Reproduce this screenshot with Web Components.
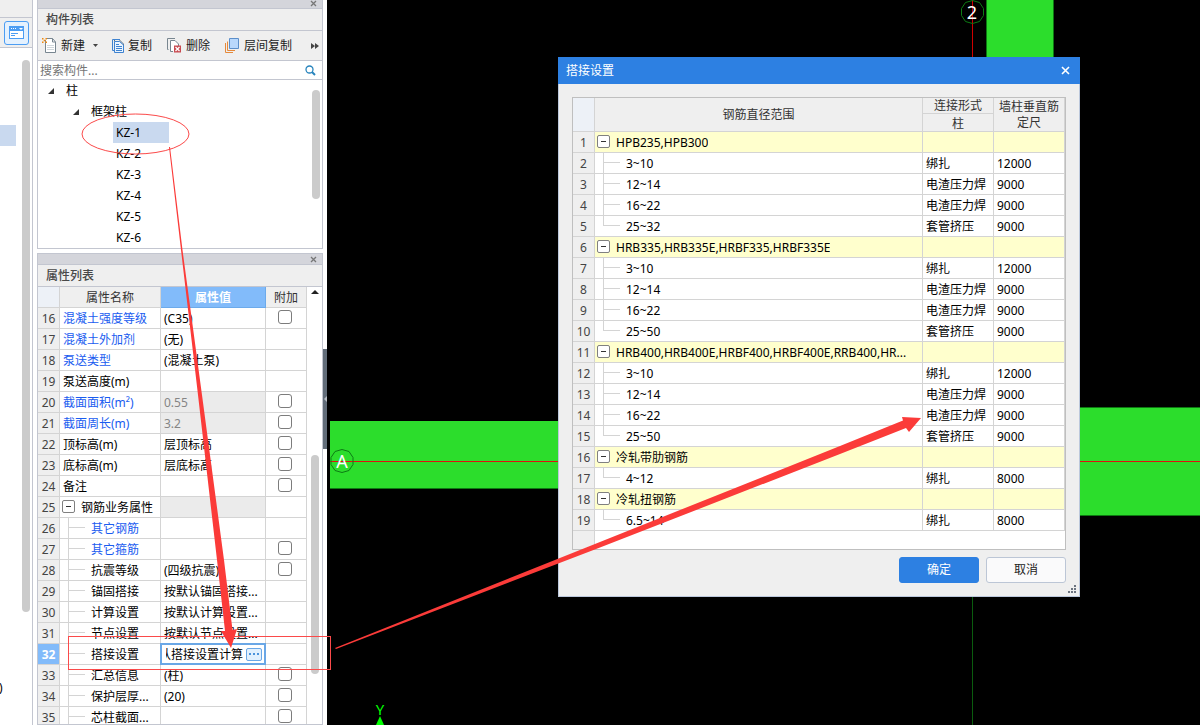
<!DOCTYPE html>
<html lang="zh-CN">
<head>
<meta charset="utf-8">
<title>搭接设置</title>
<style>
html, body { height: 100%; margin: 0; }
body {
  font: 12px/20px "Noto Sans", "Noto Sans CJK SC", sans-serif;
  color: #000;
  background: #000;
  --line: #d4d4d4;
  --frame: #c3c6d0;
  --face: #efefef;
  --blue: #2d80e2;
  --thumb: #cbcbcb;
}
</style>
</head>
<body>
<modeler-app></modeler-app>

<script>
const define = (name, html, setup) => {
  const template = document.createElement('template');
  template.innerHTML = html;
  customElements.define(name, class extends HTMLElement {
    constructor() {
      super();
      this.attachShadow({ mode: 'open' }).append(template.content.cloneNode(true));
    }
    connectedCallback() { if (setup) setup(this.shadowRoot, this); }
  });
};

/* Narrow module strip at the far left */
define('nav-strip', `
<style>
:host { display: flex; flex-direction: column; background: #fff; border-right: 1px solid var(--frame); overflow: hidden; }
.top { height: 17px; flex: none; background: var(--face); border-bottom: 1px solid var(--frame); }
.tab { height: 29px; flex: none; display: flex; justify-content: flex-end; align-items: center; padding-right: 3px; background: var(--face); border-bottom: 1px solid var(--frame); }
button { width: 25px; height: 24px; padding: 0; border: 1px solid #4c9df3; border-radius: 3px; background: #e4f1fe; display: grid; place-items: center; }
.body { flex: 1; min-height: 0; display: flex; justify-content: space-between; }
.items { width: 16px; padding-top: 77px; }
.sel { height: 21px; background: #c9d9ef; }
.cut { margin-top: 532px; margin-left: -1px; }
.thumb { width: 8px; height: 552px; margin: 12px 2px 0 0; border-radius: 4px; background: var(--thumb); }
</style>
<div class="top"></div>
<div class="tab"><button aria-label="构件"><svg width="15" height="13" viewBox="0 0 15 13"><path d="M0 0H15V13H0z" fill="#4c9df3"/><path d="M1 5H14V12H1z" fill="#fff"/><path d="M2 2h1v1H2zM4 2h1v1H4zM6 2h1v1H6z" fill="#fff"/><path d="M10 2h4l-2 2z" fill="#fff"/><path d="M2 7.500H9M2 9.500H6" stroke="#4c9df3"/></svg></button></div>
<div class="body"><div class="items"><div class="sel"></div><div class="cut">)</div></div><div class="thumb"></div></div>
`);

/* Docked panel with grip bar, title and slotted content */
define('dock-panel', `
<style>
:host { display: flex; flex-direction: column; border: 1px solid var(--frame); background: #fff; min-height: 0; }
.grip { height: 10px; flex: none; display: flex; justify-content: flex-end; align-items: center; background: #d4d5db; border-bottom: 1px solid var(--frame); }
.grip button { border: 0; padding: 0 5px; background: none; display: flex; }
h2 { flex: none; margin: 0; padding-left: 8px; height: 21px; font: inherit; font-weight: 500; line-height: 22px; color: #484848; background: var(--face); border-bottom: 1px solid var(--frame); }
</style>
<div class="grip"><button aria-label="关闭"><svg width="7" height="7" viewBox="0 0 7 7"><path d="M1 1L6 6M6 1L1 6" stroke="#777" stroke-width="1.300"/></svg></button></div>
<h2></h2>
<slot></slot>
`, (root, host) => { root.querySelector('h2').textContent = host.getAttribute('heading'); });

define('tool-button', `
<style>
:host { display: block; flex: none; }
button { display: flex; align-items: center; gap: 4px; border: 0; padding: 0; background: none; font: inherit; color: #1c1c1c; height: 24px; }
</style>
<button><slot name="icon"></slot><slot></slot><slot name="after"></slot></button>
`);

define('component-tree', `
<style>
:host { display: block; }
.tools { display: flex; align-items: center; gap: 14px; height: 29px; padding: 0 3px 0 4px; background: var(--face); border-bottom: 1px solid var(--frame); }
.more { margin-left: auto; }
svg { display: block; }
.search { display: flex; align-items: center; height: 18px; border-bottom: 1px solid var(--frame); padding-right: 6px; }
input { flex: 1; min-width: 0; border: 0; outline: 0; padding: 2px 2px 0; font: inherit; height: 18px; box-sizing: border-box; background: none; }
input::placeholder { color: #757575; opacity: 1; }
.search button { border: 0; padding: 0; background: none; }
.wrap { display: flex; justify-content: space-between; height: 168px; overflow: hidden; }
ul { list-style: none; margin: 0; padding: 0; }
li > span { display: flex; align-items: center; gap: 12px; height: 21px; }
ul ul { padding-left: 25px; }
.root { padding-left: 10px; }
.leaf { width: 53px; padding-left: 3px; margin-left: 15px; }
li > .on { background: #c9d9ef; }
.thumb { width: 8px; height: 109px; margin: 10px 2px 0 0; border-radius: 4px; background: var(--thumb); }
</style>
<div class="tools">
  <tool-button>
    <svg slot="icon" width="15" height="15" viewBox="0 0 15 15"><path d="M3.500 2V14.500H13.500V4L10.500 .500H5" fill="#fff" stroke="#788690"/><path d="M10.500 .500V4H13.500" fill="none" stroke="#788690"/><path d="M5 7.500h7M5 9.500h7M5 11.500h7" stroke="#cfd6da"/><path d="M0 0h1.500v1.500H0zM3.500 0H5v1.500H3.500zM1.700 1.700h1.600v1.600H1.700zM0 3.500h1.500V5H0zM3.500 3.500H5V5H3.500z" fill="#f08a10"/></svg>
    新建
    <svg slot="after" width="9" height="5" viewBox="0 0 9 5"><path d="M4 1h5L6.500 4z" fill="#444"/></svg>
  </tool-button>
  <tool-button>
    <svg slot="icon" width="12" height="14" viewBox="0 0 12 14"><path d="M2.500 2.500V.500H7L11.500 5V11.500H9" fill="none" stroke="#5a7080"/><path d="M8 .500H.500V11.500H2" fill="none" stroke="#3f83d0"/><path d="M2.500 2.500H7.500L11.500 6V13.500H2.500z" fill="#eaf4ff" stroke="#3f83d0"/><path d="M4 5.500h3M4 7.500h6M4 9.500h6M4 11.500h6" stroke="#3f83d0"/></svg>
    复制
  </tool-button>
  <tool-button>
    <svg slot="icon" width="16" height="15" viewBox="0 0 16 15"><path d="M2.500 11.500H1.500V.500H9" fill="none" stroke="#788690"/><path d="M7 13.500H4.500V2.500H9L12.500 6V8" fill="#fff" stroke="#788690"/><path d="M8 7.500h7v7H8z" fill="#c84a50"/><path d="M9.500 9L13.500 13M13.500 9L9.500 13" stroke="#fff" stroke-width="1.300"/></svg>
    删除
  </tool-button>
  <tool-button>
    <svg slot="icon" width="16" height="16" viewBox="0 0 16 16"><path d="M1.500 5V14.500H9M3.500 3.500V12.500H11" fill="none" stroke="#e58a3c"/><path d="M5.500 .500H14.500V10.500H5.500z" fill="#b9d8fc" stroke="#5c8fca"/></svg>
    层间复制
  </tool-button>
  <tool-button class="more"><svg slot="icon" width="8" height="6" viewBox="0 0 8 6"><path d="M0 0L4 3L0 6zM4 0L8 3L4 6z" fill="#444"/></svg></tool-button>
</div>
<div class="search"><input type="text" aria-label="搜索构件" placeholder="搜索构件..."><button aria-label="搜索"><svg width="11" height="11" viewBox="0 0 11 11"><circle cx="4.500" cy="4.500" r="3.500" fill="none" stroke="#2784bd" stroke-width="1.300"/><path d="M7 7L10 10" stroke="#2784bd" stroke-width="2"/></svg></button></div>
<div class="wrap">
  <ul class="root">
    <li><span><svg width="6" height="6"><path d="M6 0V6H0z" fill="#333"/></svg>柱</span>
      <ul><li><span><svg width="6" height="6"><path d="M6 0V6H0z" fill="#333"/></svg>框架柱</span>
        <ul id="leaves"></ul></li></ul></li>
  </ul>
  <div class="thumb"></div>
</div>
`, root => {
  root.getElementById('leaves').innerHTML = [1, 2, 3, 4, 5, 6].map(n =>
    `<li><span class="leaf${n === 1 ? ' on' : ''}">KZ-${n}</span></li>`).join('');
});

/* Grid styling shared by the two tables */
const gridCSS = `
table { border-collapse: separate; border-spacing: 0; table-layout: fixed; width: 100%; }
th, td { box-sizing: border-box; height: 21px; line-height: 18px; padding: 2px 0 0 3px; border: 0 solid var(--line); border-width: 0 1px 1px 0; font-weight: 400; text-align: left; white-space: nowrap; overflow: hidden; }
tr { height: 21px; }
td { background-color: #fff; }
th { padding: 2px 0 0; text-align: center; color: #333; background: var(--face); }
tbody th { color: #444; }
thead .corner { background: #edf1f7; }
td.node { padding: 0 0 0 2px; }
td.child { padding-left: 31px; background-image: linear-gradient(var(--line), var(--line)), linear-gradient(var(--line), var(--line)); background-repeat: no-repeat; background-position: 8px 0, 8px 9px; background-size: 1px 100%, 17px 1px; }
td.last { background-size: 1px 10px, 17px 1px; }
.node div { display: flex; align-items: flex-start; gap: 6px; height: 20px; }
.node span { padding-top: 2px; overflow: hidden; text-overflow: ellipsis; }
.fold { flex: none; width: 13px; height: 13px; margin: 3px 0 0; padding: 0; border: 1px solid #808080; border-radius: 2px; background: #fff; display: grid; place-items: center; }
.fold::before { content: ""; width: 5px; height: 1px; background: #333; }
`;
const node = text => `<td class="node"><div><button class="fold" aria-label="折叠"></button><span>${text}</span></div></td>`;

define('property-grid', `
<style>${gridCSS}
:host { display: flex; flex: 1; min-height: 0; overflow: hidden; }
.rows { flex: 1; min-width: 0; }
thead .cur { background: #82bbfa; color: #fff; font-weight: 700; border-color: #6caaeb; }
tbody .cur { background: #82bbfa; color: #fff; font-weight: 700; }
.blue { color: #1a5cf0; }
.off { background: #ebebeb; color: #858585; }
td.tick { padding: 0; }
.tick input { appearance: none; display: block; box-sizing: border-box; width: 14px; height: 14px; margin: 0 0 2px 12px; border: 1px solid #7c7c7c; border-radius: 3px; background: #fff; }
td.edit { padding: 0; overflow: visible; }
.field { display: flex; align-items: center; gap: 3px; box-sizing: border-box; height: 22px; margin: -1px; padding: 0 2px 0 4px; border: 2px solid #6aa7e6; background: #fff; }
.field input { flex: 1; min-width: 0; box-sizing: border-box; border: 0; outline: 0; padding: 2px 0 0; font: inherit; height: 18px; background: none; }
.field button { flex: none; width: 16px; height: 13px; padding: 0; border: 1px solid #6aa7e6; border-radius: 2px; background: #e1f0fe; display: grid; place-items: center; }
.bar { width: 16px; flex: none; display: flex; flex-direction: column; align-items: center; gap: 160px; padding: 3px 0 0 2px; box-sizing: border-box; }
.bar svg { flex: none; }
.thumb { flex: none; width: 8px; height: 219px; border-radius: 4px; background: var(--thumb); }
</style>
<div class="rows"><table>
<colgroup><col style="width:22px"><col style="width:101px"><col style="width:105px"><col style="width:41px"></colgroup>
<thead><tr><th class="corner"></th><th>属性名称</th><th class="cur">属性值</th><th>附加</th></tr></thead>
<tbody></tbody></table></div>
<div class="bar"><svg width="8" height="5"><path d="M4 0L8 4H0z" fill="#222"/></svg><div class="thumb"></div></div>
`, root => {
  /* name, value, has tick box, name style, value style */
  const rows = [
    ['混凝土强度等级', '(C35)', 1, 'blue'], ['混凝土外加剂', '(无)', 0, 'blue'],
    ['泵送类型', '(混凝土泵)', 0, 'blue'], ['泵送高度(m)', '', 0, ''],
    ['截面面积(m²)', '0.55', 1, 'blue', 'off'], ['截面周长(m)', '3.2', 1, 'blue', 'off'],
    ['顶标高(m)', '层顶标高', 1, ''], ['底标高(m)', '层底标高', 1, ''], ['备注', '', 1, ''],
    ['钢筋业务属性', '', 0, 'node', 'off'],
    ['其它钢筋', '', 0, 'child blue'], ['其它箍筋', '', 1, 'child blue'],
    ['抗震等级', '(四级抗震)', 1, 'child'], ['锚固搭接', '按默认锚固搭接...', 0, 'child'],
    ['计算设置', '按默认计算设置...', 0, 'child'], ['节点设置', '按默认节点设置...', 0, 'child'],
    ['搭接设置', null, 0, 'child'], ['汇总信息', '(柱)', 1, 'child'],
    ['保护层厚...', '(20)', 1, 'child'], ['芯柱截面...', '', 1, 'child'],
  ];
  root.querySelector('tbody').innerHTML = rows.map(([name, value, tick, cls, vcls], i) => `
    <tr><th${value === null ? ' class="cur"' : ''}>${i + 16}</th>
    ${cls === 'node' ? node(name) : `<td class="${cls}">${name}</td>`}
    ${value === null
      ? `<td class="edit"><div class="field"><input type="text" aria-label="${name}" value="按默认搭接设置计算"><button aria-label="更多"><svg width="10" height="2"><path d="M0 0h2v2H0zM4 0h2v2H4zM8 0h2v2H8z" fill="#4b93dc"/></svg></button></div></td>`
      : `<td class="${vcls || ''}">${value}</td>`}
    <td class="tick">${tick ? `<input type="checkbox" aria-label="附加 ${name}">` : ''}</td></tr>`).join('');
  /* keep the end of the edited value in view */
  const field = root.querySelector('.field input');
  field.scrollLeft = field.scrollWidth;
});

/* Drawing area: beams, axes and their labels */
define('cad-canvas', `
<style>
:host { display: block; position: relative; background: #000; overflow: hidden; }
svg { display: block; width: 100%; height: 100%; }
text { font-family: "Noto Sans", sans-serif; font-size: 18px; fill: #fff; text-anchor: middle; }
.beam { fill: #2cdd2c; stroke: #0d7a12; }
.bubble { fill: none; stroke: #0c7c14; }
</style>
<svg aria-label="绘图区">
  <path d="M645.500 590V2000" stroke="#0a5c0e"/>
  <rect class="beam" x="659.500" y="-5.500" width="67" height="90"/>
  <rect class="beam" x="720.500" y="407.500" width="3000" height="108"/>
  <path d="M3 421H300V489H3z" fill="#2cdd2c"/>
  <path d="M3 488.500H300" stroke="#0d7a12"/>
  <path d="M3 461.500H3000" stroke="#e01010"/>
  <path d="M645.500 0V58" stroke="#d00000"/>
  <path class="bubble" d="M15 449.500l7 2 4 6v7l-4 6-7 2-7-2-4-6v-7l4-6z"/>
  <path class="bubble" d="M645.500 .500l7 2 4 6v7l-4 6-7 2-7-2-4-6v-7l4-6z"/>
  <text x="15" y="468">A</text>
  <text x="645" y="19">2</text>
  <text x="53" y="715" style="fill:#0f0;font-size:15px">Y</text>
  <path d="M53 716L57 725V730H49V725z" fill="#0f0"/>
</svg>
<slot></slot>
`);

define('lap-dialog', `
<style>${gridCSS}
:host { display: flex; flex-direction: column; box-sizing: border-box; border: 1px solid #bcc8dc; border-top: 0; background: var(--face); }
header { display: flex; align-items: center; justify-content: space-between; height: 27px; margin: 0 -1px; padding: 0 10px 0 8px; background: var(--blue); color: #fff; }
h1 { margin: 0; font: inherit; }
header button { border: 0; padding: 0; background: none; display: flex; }
.frame { margin: 13px 13px 0; border: 1px solid #bfbfbf; background: linear-gradient(90deg, var(--face) 21px, var(--line) 21px, var(--line) 22px, #fff 22px); padding-bottom: 18px; }
thead tr:first-child { height: 16px; }
thead tr + tr { height: 18px; }
thead th { line-height: 14px; height: 16px; padding-top: 1px; }
thead tr + tr th { line-height: 15px; height: 18px; padding-top: 2px; }
thead th.two { line-height: 16px; white-space: normal; padding: 1px 4px 0; }
.group td { background-color: #ffffcd; }
footer { display: flex; justify-content: flex-end; gap: 7px; padding: 7px 13px 0; }
footer button { width: 80px; height: 26px; padding: 0; font: inherit; border: 1px solid #bcc6d6; border-radius: 3px; background: #fafafb; color: #222; }
footer .ok { background: var(--blue); border-color: var(--blue); color: #fff; }
.grip { align-self: flex-end; margin: 2px 2px; display: block; }
</style>
<header><h1>搭接设置</h1><button aria-label="关闭"><svg width="9" height="9" viewBox="0 0 9 9"><path d="M1 1L8 8M8 1L1 8" stroke="#fff" stroke-width="1.600"/></svg></button></header>
<div class="frame"><table>
<colgroup><col style="width:22px"><col><col style="width:71px"><col style="width:71px"></colgroup>
<thead>
<tr><th rowspan="2" class="corner"></th><th rowspan="2">钢筋直径范围</th><th>连接形式</th><th rowspan="2" class="two">墙柱垂直筋定尺</th></tr>
<tr><th>柱</th></tr>
</thead><tbody></tbody></table></div>
<footer><button class="ok">确定</button><button>取消</button></footer>
<svg class="grip" width="9" height="9"><path d="M6 0h2v2H6zM3 3h2v2H3zM6 3h2v2H6zM0 6h2v2H0zM3 6h2v2H3zM6 6h2v2H6z" fill="#6c7480"/></svg>
`, root => {
  const tie = '绑扎', weld = '电渣压力焊', sleeve = '套管挤压';
  const bars = max => [['3~10', tie, 12000], ['12~14', weld, 9000], ['16~22', weld, 9000], [max, sleeve, 9000]];
  const groups = [
    ['HPB235,HPB300', bars('25~32')],
    ['HRB335,HRB335E,HRBF335,HRBF335E', bars('25~50')],
    ['HRB400,HRB400E,HRBF400,HRBF400E,RRB400,HR...', bars('25~50')],
    ['冷轧带肋钢筋', [['4~12', tie, 8000]]],
    ['冷轧扭钢筋', [['6.5~14', tie, 8000]]],
  ];
  let n = 0;
  root.querySelector('tbody').innerHTML = groups.map(([name, items]) =>
    `<tr class="group"><th>${++n}</th>${node(name)}<td></td><td></td></tr>` +
    items.map(([range, joint, len], i) =>
      `<tr><th>${++n}</th><td class="child${i === items.length - 1 ? ' last' : ''}">${range}</td><td>${joint}</td><td>${len}</td></tr>`).join('')
  ).join('');
});

/* Red guide marks drawn over the window */
define('guide-marks', `
<style>
:host { display: block; pointer-events: none; }
svg { display: block; width: 100%; height: 100%; }
.o { fill: none; stroke: #fb4a4a; }
.f { fill: #fb3b39; }
</style>
<svg aria-hidden="true">
  <ellipse class="o" cx="135.500" cy="134" rx="53.500" ry="20"/>
  <rect class="o" x="68.500" y="636.500" width="262" height="33"/>
  <path class="f" d="M169 147L170 147L182.500 250L202 395L224 560L232.500 630L237 629L231 648L221 631L225 631L217 560L198 395L181 250z"/>
  <path class="f" d="M335 648L840 446L903 420.500L902 417L921 418L909 432L906 428L840 454L600 547.500L336 649z"/>
</svg>
`);

define('modeler-app', `
<style>
:host { display: grid; grid-template-columns: 33px 294px 1fr; grid-template-rows: 100vh; position: relative; overflow: hidden; }
.dock { display: grid; grid-template-columns: 286px 4px; padding-left: 4px; background: #fff; min-height: 0; }
.panels { display: flex; flex-direction: column; gap: 4px; min-height: 0; margin-top: -3px; }
.props { flex: 1; }
.handle { height: 100px; margin-top: 349px; border: 0; padding: 0; background: #626d79; display: flex; align-items: center; }
lap-dialog { position: absolute; left: 231px; top: 57px; width: 522px; }
guide-marks { position: absolute; inset: 0; }
</style>
<nav-strip></nav-strip>
<div class="dock">
  <div class="panels">
    <dock-panel heading="构件列表"><component-tree></component-tree></dock-panel>
    <dock-panel class="props" heading="属性列表"><property-grid></property-grid></dock-panel>
  </div>
  <button class="handle" aria-label="收起"><svg width="4" height="6"><path d="M4 0V6L1 3z" fill="#b8bec5"/></svg></button>
</div>
<cad-canvas><lap-dialog></lap-dialog></cad-canvas>
<guide-marks></guide-marks>
`);
</script>
</body>
</html>
